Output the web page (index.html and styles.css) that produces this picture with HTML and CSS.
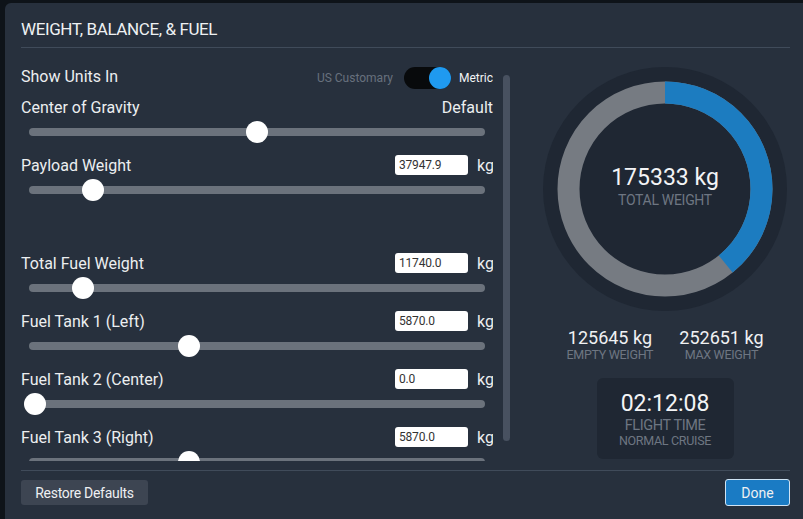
FILE: index.html
```html
<!DOCTYPE html>
<html>
<head>
<meta charset="utf-8">
<link rel="stylesheet" href="styles.css">
</head>
<body>
<div class="dialog">
  <div class="header"><h1 class="title">WEIGHT, BALANCE, &amp; FUEL</h1></div>
  <div class="body">
    <div class="left">
      <div class="scroll">
        <div class="row units-row">
          <span class="label">Show Units In</span>
          <span class="unit-opt muted">US Customary</span>
          <span class="toggle"><span class="knob"></span></span>
          <span class="unit-opt">Metric</span>
        </div>
        <div class="group">
          <div class="row"><span class="label">Center of Gravity</span><span class="label right-text">Default</span></div>
          <div class="slider"><div class="track"></div><div class="thumb" style="left:225px"></div></div>
        </div>
        <div class="group">
          <div class="row"><span class="label">Payload Weight</span><span class="field">37947.9</span><span class="kg">kg</span></div>
          <div class="slider"><div class="track"></div><div class="thumb" style="left:61px"></div></div>
        </div>
        <div class="group spaced">
          <div class="row"><span class="label">Total Fuel Weight</span><span class="field">11740.0</span><span class="kg">kg</span></div>
          <div class="slider"><div class="track"></div><div class="thumb" style="left:51px"></div></div>
        </div>
        <div class="group">
          <div class="row"><span class="label">Fuel Tank 1 (Left)</span><span class="field">5870.0</span><span class="kg">kg</span></div>
          <div class="slider"><div class="track"></div><div class="thumb" style="left:157px"></div></div>
        </div>
        <div class="group">
          <div class="row"><span class="label">Fuel Tank 2 (Center)</span><span class="field">0.0</span><span class="kg">kg</span></div>
          <div class="slider"><div class="track"></div><div class="thumb" style="left:3px"></div></div>
        </div>
        <div class="group">
          <div class="row"><span class="label">Fuel Tank 3 (Right)</span><span class="field">5870.0</span><span class="kg">kg</span></div>
          <div class="slider"><div class="track"></div><div class="thumb" style="left:157px"></div></div>
        </div>
      </div>
      <div class="scrollbar"></div>
    </div>
    <div class="right">
      <div class="donut">
        <svg class="donut-svg" width="244" height="244" viewBox="0 0 244 244">
          <circle cx="122" cy="122" r="122" fill="#1f2733"/>
          <circle cx="122" cy="122" r="96.5" fill="none" stroke="#767b82" stroke-width="22"/>
          <circle cx="122" cy="122" r="96.5" fill="none" stroke="#1c7cc0" stroke-width="22"
            stroke-dasharray="237.1 1000" transform="rotate(-90 122 122)"/>
        </svg>
        <div class="donut-text">
          <div class="big">175333 kg</div>
          <div class="sub">TOTAL WEIGHT</div>
        </div>
      </div>
      <div class="stats">
        <div class="stat"><div class="stat-val">125645 kg</div><div class="stat-lbl">EMPTY WEIGHT</div></div>
        <div class="stat"><div class="stat-val">252651 kg</div><div class="stat-lbl">MAX WEIGHT</div></div>
      </div>
      <div class="flight">
        <div class="time">02:12:08</div>
        <div class="ft">FLIGHT TIME</div>
        <div class="nc">NORMAL CRUISE</div>
      </div>
    </div>
  </div>
  <div class="footer">
    <button class="btn restore">Restore Defaults</button>
    <button class="btn done">Done</button>
  </div>
</div>
</body>
</html>
```
FILE: styles.css
```css
* { box-sizing: border-box; }
html, body { margin: 0; padding: 0; }
body {
  background: #0e1319;
  width: 803px;
  height: 519px;
  overflow: hidden;
  font-family: Roboto, "Liberation Sans", sans-serif;
  color: #eceef0;
}
.dialog {
  margin: 3px 0 0 5px;
  height: 516px;
  background: #27303d;
  border-radius: 6px 0 0 0;
  display: flex;
  flex-direction: column;
}
.header {
  margin: 0 13px 0 16px;
  padding: 16px 0 8px;
  border-bottom: 1px solid #404b5a;
}
.title {
  margin: 0;
  font-size: 17px;
  font-weight: 400;
  line-height: 20px;
  letter-spacing: -0.4px;
  color: #eef0f2;
}
.body {
  flex: 1;
  display: flex;
  padding: 0 0 0 16px;
  min-height: 0;
}
.left {
  width: 489px;
  display: flex;
}
.scroll {
  width: 473px;
  margin-top: 19px;
  height: 394px;
  overflow: hidden;
}
.scrollbar {
  width: 7px;
  margin: 27px 0 0 10px;
  height: 366px;
  border-radius: 4px;
  background: #485160;
}
.row {
  display: flex;
  align-items: center;
  height: 22px;
}
.units-row { margin-bottom: 7px; }
.units-row .label { margin-top: -4px; }
.label {
  flex: 1;
  font-size: 16px;
  color: #eceef0;
  white-space: nowrap;
}
.right-text { flex: none; }
.unit-opt {
  font-size: 12px;
  color: #f2f3f5;
}
.unit-opt.muted { color: #68717d; margin-right: 11px; }
.toggle {
  width: 47px;
  height: 22px;
  border-radius: 11px;
  background: #080a0c;
  display: flex;
  justify-content: flex-end;
  margin-right: 8px;
}
.knob {
  width: 22px;
  height: 22px;
  border-radius: 50%;
  background: #1f9af0;
}
.group { margin-bottom: 10px; }
.group.spaced { margin-top: 50px; }
.field {
  width: 73px;
  height: 20px;
  background: #fff;
  border-radius: 3px;
  color: #333;
  font-size: 12px;
  line-height: 20px;
  padding-left: 4px;
  margin-right: 9px;
  letter-spacing: -0.2px;
}
.kg {
  font-size: 16px;
  width: 16px;
}
.slider {
  position: relative;
  height: 26px;
  padding: 10px 8px 0;
}
.track {
  height: 8px;
  border-radius: 4px;
  background: #6b727c;
}
.thumb {
  position: absolute;
  top: 3px;
  width: 22px;
  height: 22px;
  border-radius: 50%;
  background: #fff;
}
.right {
  margin-left: 33px;
  width: 244px;
  padding-top: 19px;
  display: flex;
  flex-direction: column;
  align-items: center;
}
.donut {
  display: grid;
  width: 244px;
  height: 244px;
}
.donut-svg, .donut-text { grid-area: 1 / 1; }
.donut-text {
  align-self: center;
  justify-self: center;
  text-align: center;
  padding-bottom: 4px;
}
.big {
  font-size: 23px;
  line-height: 26px;
  color: #f3f4f6;
}
.sub {
  font-size: 14px;
  line-height: 18px;
  color: #6e7682;
  letter-spacing: -0.3px;
}
.stats {
  display: flex;
  gap: 26px;
  margin-top: 17px;
  text-align: center;
}
.stat-val {
  font-size: 18px;
  line-height: 20px;
  color: #f0f1f3;
}
.stat-lbl {
  font-size: 12.5px;
  line-height: 14px;
  color: #6e7682;
  letter-spacing: -0.3px;
}
.flight {
  margin-top: 16px;
  width: 137px;
  height: 81px;
  border-radius: 6px;
  background: #1f2733;
  text-align: center;
  padding-top: 13px;
}
.time {
  font-size: 23px;
  line-height: 26px;
  color: #f3f4f6;
}
.ft {
  font-size: 14.5px;
  line-height: 18px;
  color: #6e7682;
  letter-spacing: -0.4px;
}
.nc {
  font-size: 12.5px;
  line-height: 12px;
  color: #6e7682;
  letter-spacing: -0.3px;
}
.footer {
  margin: 0 13px 0 16px;
  border-top: 1px solid #404b5a;
  padding: 8px 0 13px;
  display: flex;
  justify-content: space-between;
  align-items: center;
}
.btn {
  font-family: Roboto, "Liberation Sans", sans-serif;
  font-size: 14px;
  color: #eef0f2;
  border-radius: 3px;
  cursor: pointer;
}
.restore {
  width: 127px;
  height: 25px;
  background: #3d4552;
  border: none;
  letter-spacing: -0.3px;
}
.done {
  width: 65px;
  height: 27px;
  background: #1a7bc4;
  border: 1px solid #cfe3f4;
}
```
